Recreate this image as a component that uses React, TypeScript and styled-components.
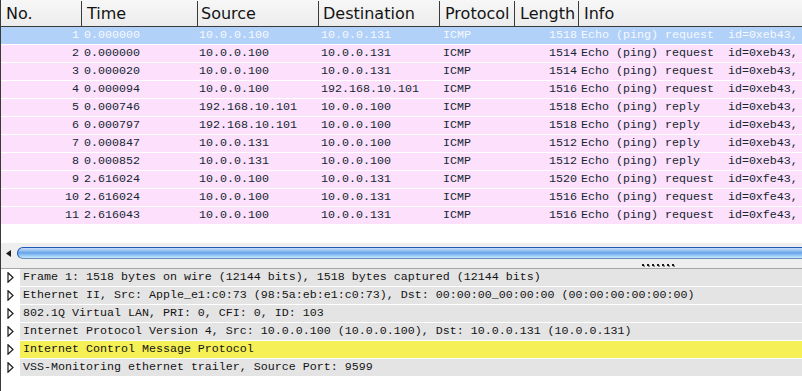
import React from "react";
import styled, { createGlobalStyle } from "styled-components";

const Global = createGlobalStyle`
  html, body { margin: 0; padding: 0; background: #ffffff; }
  body { width: 802px; height: 391px; overflow: hidden; }
`;

const MONO = `"Liberation Mono", "DejaVu Sans Mono", monospace`;
const SANS = `"DejaVu Sans", "Noto Sans", sans-serif`;

const Window = styled.div`
  width: 802px;
  height: 391px;
  display: flex;
  flex-direction: column;
  background: #ffffff;
  border-left: 1px solid #3a3a3a;
  box-sizing: border-box;
  overflow: hidden;
`;

const COLS = "81px 116px 121px 121px 75px 64px 1fr";

const ListPane = styled.div`
  display: flex;
  flex-direction: column;
  height: 243px;
  background: #ffffff;
`;

const HeaderRow = styled.div`
  display: grid;
  grid-template-columns: ${COLS};
  height: 26px;
  border-bottom: 1px solid #3a3a3a;
  background: linear-gradient(to bottom, #f7f7f7, #ececec);
`;

const HeaderCell = styled.div<{ $pad: number; $last?: boolean }>`
  font-family: ${SANS};
  font-size: 16px;
  color: #141414;
  line-height: 26px;
  padding-left: ${(p) => p.$pad}px;
  white-space: nowrap;
  overflow: hidden;
  border-right: ${(p) => (p.$last ? "none" : "1px solid #3a3a3a")};
  margin: 1px 0 0 0;
`;

const PacketRow = styled.div<{ $selected?: boolean }>`
  display: grid;
  grid-template-columns: ${COLS};
  height: 17px;
  border-bottom: 1px solid #ffffff;
  background: ${(p) => (p.$selected ? "#b1d1f9" : "#fce0fc")};
  color: ${(p) => (p.$selected ? "#f6f9ff" : "#142630")};
  font-family: ${MONO};
  font-size: 11.67px;
  line-height: 17px;
`;

const Cell = styled.div<{ $align: "left" | "right"; $pl: number; $pr: number }>`
  text-align: ${(p) => p.$align};
  padding-left: ${(p) => p.$pl}px;
  padding-right: ${(p) => p.$pr}px;
  white-space: pre;
  overflow: hidden;
`;

const Filler = styled.div`
  flex: 1;
  background: #ffffff;
`;

const ScrollArea = styled.div`
  height: 25px;
  background: #eeeeee;
  border-bottom: 1px solid #a6a6a6;
  display: flex;
  flex-direction: column;
  position: relative;
`;

const ScrollTrack = styled.div`
  display: flex;
  align-items: center;
  height: 12px;
  margin-top: 4px;
`;

const ArrowBox = styled.div`
  width: 16px;
  display: flex;
  justify-content: center;
  align-items: center;
`;

const Thumb = styled.div`
  flex: 1;
  height: 12px;
  margin-right: -20px;
  border-radius: 6px 0 0 6px;
  box-sizing: border-box;
  border: 1px solid #1f57b5;
  border-bottom-color: #6b8fb8;
  background: linear-gradient(
    to bottom,
    #c6dcf8 0%,
    #9cc3f1 25%,
    #6ea6ea 45%,
    #78b2ef 60%,
    #a2d2f8 80%,
    #c3e8fc 100%
  );
`;

const Grip = styled.div`
  position: absolute;
  left: 641px;
  bottom: 2px;
  display: flex;
  gap: 3px;
`;

const GripDot = styled.span`
  width: 2px;
  height: 2px;
  background: #1a1a1a;
  box-shadow: 1px 1px 0 #8a8a8a;
`;

const DetailPane = styled.div`
  flex: 1;
  display: flex;
  flex-direction: column;
  background: #ffffff;
  border-left: 1px solid #3a3a3a;
  margin-left: -1px;
`;

const DetailRow = styled.div`
  display: flex;
  height: 17px;
  margin-bottom: 1px;
`;

const Expander = styled.div`
  width: 19px;
  display: flex;
  align-items: center;
  padding-left: 6px;
  box-sizing: border-box;
`;

const DetailText = styled.div<{ $hl?: boolean }>`
  flex: 1;
  background: ${(p) => (p.$hl ? "#f5f055" : "#e4e4e4")};
  font-family: ${MONO};
  font-size: 11.67px;
  line-height: 17px;
  color: #141414;
  padding-left: 3px;
  white-space: pre;
  overflow: hidden;
`;

const columns: { title: string; hpad: number; align: "left" | "right"; pl: number; pr: number }[] = [
  { title: "No.", hpad: 5, align: "right", pl: 0, pr: 3 },
  { title: "Time", hpad: 5, align: "left", pl: 2, pr: 0 },
  { title: "Source", hpad: 3, align: "left", pl: 1, pr: 0 },
  { title: "Destination", hpad: 4, align: "left", pl: 2, pr: 0 },
  { title: "Protocol", hpad: 5, align: "left", pl: 3, pr: 0 },
  { title: "Length", hpad: 5, align: "right", pl: 0, pr: 2 },
  { title: "Info", hpad: 5, align: "left", pl: 2, pr: 0 },
];

const REQ = "Echo (ping) request  ";
const REP = "Echo (ping) reply    ";

const packets: string[][] = [
  ["1", "0.000000", "10.0.0.100", "10.0.0.131", "ICMP", "1518", REQ + "id=0xeb43,"],
  ["2", "0.000000", "10.0.0.100", "10.0.0.131", "ICMP", "1514", REQ + "id=0xeb43,"],
  ["3", "0.000020", "10.0.0.100", "10.0.0.131", "ICMP", "1514", REQ + "id=0xeb43,"],
  ["4", "0.000094", "10.0.0.100", "192.168.10.101", "ICMP", "1516", REQ + "id=0xeb43,"],
  ["5", "0.000746", "192.168.10.101", "10.0.0.100", "ICMP", "1518", REP + "id=0xeb43,"],
  ["6", "0.000797", "192.168.10.101", "10.0.0.100", "ICMP", "1518", REP + "id=0xeb43,"],
  ["7", "0.000847", "10.0.0.131", "10.0.0.100", "ICMP", "1512", REP + "id=0xeb43,"],
  ["8", "0.000852", "10.0.0.131", "10.0.0.100", "ICMP", "1512", REP + "id=0xeb43,"],
  ["9", "2.616024", "10.0.0.100", "10.0.0.131", "ICMP", "1520", REQ + "id=0xfe43,"],
  ["10", "2.616024", "10.0.0.100", "10.0.0.131", "ICMP", "1516", REQ + "id=0xfe43,"],
  ["11", "2.616043", "10.0.0.100", "10.0.0.131", "ICMP", "1516", REQ + "id=0xfe43,"],
];

const details: { text: string; hl?: boolean }[] = [
  { text: "Frame 1: 1518 bytes on wire (12144 bits), 1518 bytes captured (12144 bits)" },
  { text: "Ethernet II, Src: Apple_e1:c0:73 (98:5a:eb:e1:c0:73), Dst: 00:00:00_00:00:00 (00:00:00:00:00:00)" },
  { text: "802.1Q Virtual LAN, PRI: 0, CFI: 0, ID: 103" },
  { text: "Internet Protocol Version 4, Src: 10.0.0.100 (10.0.0.100), Dst: 10.0.0.131 (10.0.0.131)" },
  { text: "Internet Control Message Protocol", hl: true },
  { text: "VSS-Monitoring ethernet trailer, Source Port: 9599" },
];

const TriangleIcon = () => (
  <svg width="7" height="11" viewBox="0 0 7 11">
    <path d="M1 0.8 L6 5.5 L1 10.2 Z" fill="#ffffff" stroke="#1a1a1a" strokeWidth="1.2" strokeLinejoin="miter" />
  </svg>
);

const LeftArrow = () => (
  <svg width="6" height="7" viewBox="0 0 6 7">
    <path d="M0 3.5 L5 0 L5 7 Z" fill="#1a1a1a" />
  </svg>
);

export default function App() {
  return (
    <>
      <Global />
      <Window>
        <ListPane>
          <HeaderRow>
            {columns.map((c, i) => (
              <HeaderCell key={c.title} $pad={c.hpad} $last={i === columns.length - 1}>
                {c.title}
              </HeaderCell>
            ))}
          </HeaderRow>
          {packets.map((p, r) => (
            <PacketRow key={r} $selected={r === 0}>
              {p.map((v, i) => (
                <Cell key={i} $align={columns[i].align} $pl={columns[i].pl} $pr={columns[i].pr}>
                  {v}
                </Cell>
              ))}
            </PacketRow>
          ))}
          <Filler />
        </ListPane>
        <ScrollArea>
          <ScrollTrack>
            <ArrowBox>
              <LeftArrow />
            </ArrowBox>
            <Thumb />
          </ScrollTrack>
          <Grip>
            {Array.from({ length: 7 }).map((_, i) => (
              <GripDot key={i} />
            ))}
          </Grip>
        </ScrollArea>
        <DetailPane>
          {details.map((d, i) => (
            <DetailRow key={i}>
              <Expander>
                <TriangleIcon />
              </Expander>
              <DetailText $hl={d.hl}>{d.text}</DetailText>
            </DetailRow>
          ))}
        </DetailPane>
      </Window>
    </>
  );
}
